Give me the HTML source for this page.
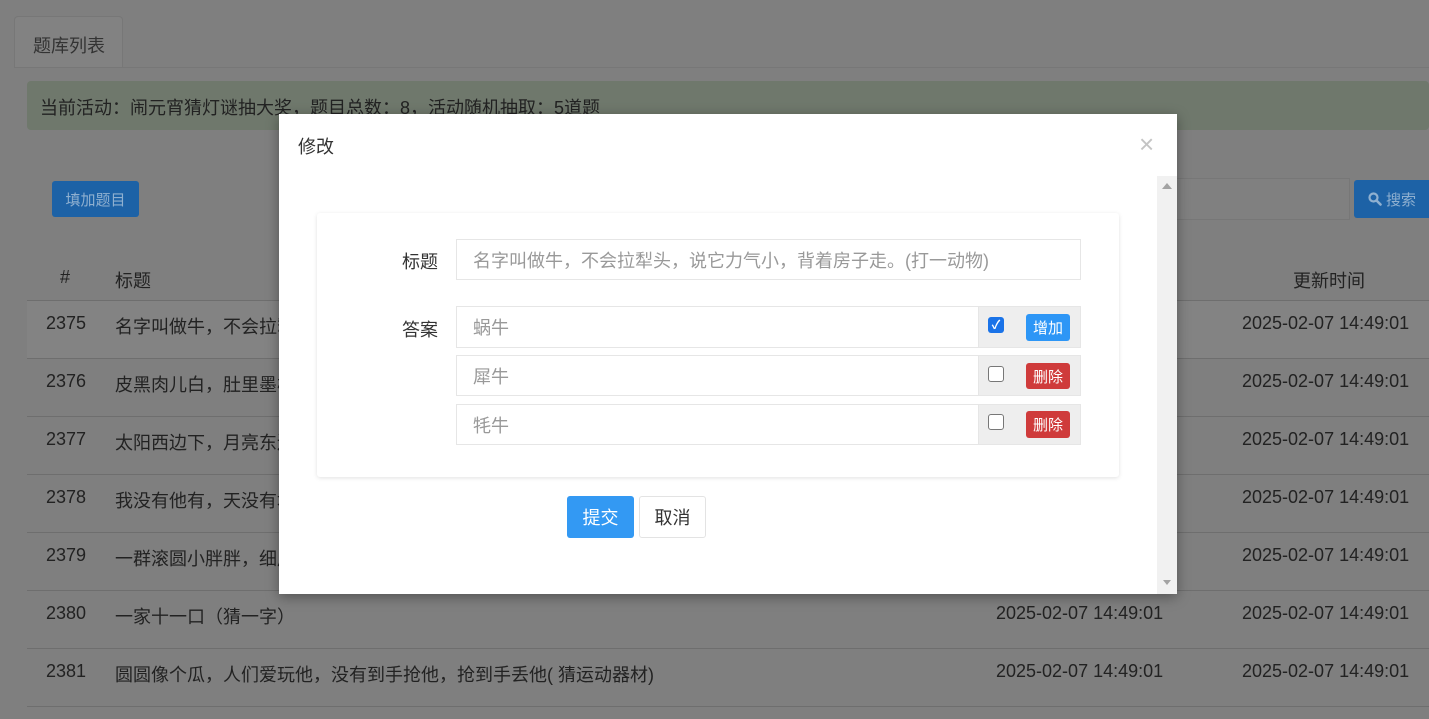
<!DOCTYPE html>
<html><head><meta charset="utf-8"><style>
*{box-sizing:border-box;margin:0;padding:0}
body{width:1429px;height:719px;overflow:hidden;background:#7f7f7f;font-family:"Liberation Sans","Noto Sans CJK SC",sans-serif;color:#1a1a1a;position:relative}
.a{position:absolute;white-space:nowrap}
.line{position:absolute;left:27px;right:0;height:1px;background:#6e6e6e}
.t{font-size:18px;color:#222}
.in{position:absolute;background:#fff;border:1px solid #e6e6e6;font-size:18px;color:#999;padding-left:16px;display:flex;align-items:center}
.addon{position:absolute;background:#eee;border:1px solid #e6e6e6}
.btn{position:absolute;color:#fff;font-size:15px;border-radius:3px;display:flex;align-items:center;justify-content:center}
.cb{position:absolute;width:16px;height:16px;border:1px solid #777;border-radius:3px;background:#fff}
</style></head><body>
<div class="a" style="left:14px;top:16px;width:109px;height:52px;background:#828282;border:1px solid #777;border-bottom:none;border-radius:4px 4px 0 0"></div>
<div class="a" style="left:14px;top:67px;right:0;height:1px;background:#777"></div>
<div class="a t" style="left:33px;top:32px;font-size:18px;color:#333">题库列表</div>
<div class="a" style="left:27px;top:81px;right:0;height:49px;background:#6f786c;border-radius:4px"></div>
<div class="a t" style="left:40px;top:94px;color:#222">当前活动：闹元宵猜灯谜抽大奖，题目总数：8，活动随机抽取：5道题</div>
<div class="btn" style="left:52px;top:181px;width:87px;height:36px;background:#1d62a6;color:#8fb0d0">填加题目</div>
<div class="a" style="left:1170px;top:178px;width:180px;height:42px;border:1px solid #777;background:#808080"></div>
<div class="btn" style="left:1354px;top:180px;width:80px;height:38px;background:#1d62a6;color:#8fb0d0;justify-content:flex-start;padding-left:14px"><svg width="14" height="14" viewBox="0 0 14 14" style="margin-right:4px"><circle cx="5.5" cy="5.5" r="4" fill="none" stroke="#8fb0d0" stroke-width="2.2"/><path d="M8.5 8.5L12.5 12.5" stroke="#8fb0d0" stroke-width="2.6" stroke-linecap="round"/></svg>搜索</div>
<div class="a t" style="left:60px;top:267px">#</div>
<div class="a t" style="left:115px;top:267px">标题</div>
<div class="a t" style="left:1293px;top:267px">更新时间</div>
<div class="line" style="top:300px"></div>
<div class="a" style="left:27px;top:301px;right:0;height:57px;background:#838383"></div>
<div class="line" style="top:358px"></div><div class="line" style="top:416px"></div><div class="line" style="top:474px"></div><div class="line" style="top:532px"></div><div class="line" style="top:590px"></div><div class="line" style="top:648px"></div><div class="line" style="top:706px"></div>
<div class="a t" style="left:46px;top:313px">2375</div><div class="a t" style="left:115px;top:313px">名字叫做牛，不会拉犁</div>
<div class="a t" style="left:46px;top:371px">2376</div><div class="a t" style="left:115px;top:371px">皮黑肉儿白，肚里墨样</div>
<div class="a t" style="left:46px;top:429px">2377</div><div class="a t" style="left:115px;top:429px">太阳西边下，月亮东边</div>
<div class="a t" style="left:46px;top:487px">2378</div><div class="a t" style="left:115px;top:487px">我没有他有，天没有地</div>
<div class="a t" style="left:46px;top:545px">2379</div><div class="a t" style="left:115px;top:545px">一群滚圆小胖胖，细皮</div>
<div class="a t" style="left:46px;top:603px">2380</div><div class="a t" style="left:115px;top:603px">一家十一口（猜一字）</div>
<div class="a t" style="left:46px;top:661px">2381</div><div class="a t" style="left:115px;top:661px">圆圆像个瓜，人们爱玩他，没有到手抢他，抢到手丢他( 猜运动器材)</div>
<div class="a t" style="left:996px;top:603px">2025-02-07 14:49:01</div><div class="a t" style="left:996px;top:661px">2025-02-07 14:49:01</div>
<div class="a t" style="left:1242px;top:313px">2025-02-07 14:49:01</div>
<div class="a t" style="left:1242px;top:371px">2025-02-07 14:49:01</div>
<div class="a t" style="left:1242px;top:429px">2025-02-07 14:49:01</div>
<div class="a t" style="left:1242px;top:487px">2025-02-07 14:49:01</div>
<div class="a t" style="left:1242px;top:545px">2025-02-07 14:49:01</div>
<div class="a t" style="left:1242px;top:603px">2025-02-07 14:49:01</div>
<div class="a t" style="left:1242px;top:661px">2025-02-07 14:49:01</div>

<div class="a" style="left:279px;top:114px;width:898px;height:480px;background:#fff;box-shadow:0 3px 12px rgba(0,0,0,.35)"></div>
<div class="a" style="left:298px;top:133px;font-size:18px;color:#333">修改</div>
<div class="a" style="left:1139px;top:129px;font-size:26px;color:#c4c4c4">×</div>
<div class="a" style="left:1157px;top:176px;width:20px;height:418px;background:#f1f1f1"></div>
<div class="a" style="left:1162px;top:183px;width:0;height:0;border-left:5px solid transparent;border-right:5px solid transparent;border-bottom:6px solid #a3a3a3"></div>
<div class="a" style="left:1163px;top:580px;width:0;height:0;border-left:4px solid transparent;border-right:4px solid transparent;border-top:5px solid #a3a3a3"></div>
<div class="a" style="left:317px;top:213px;width:802px;height:264px;background:#fff;border-radius:3px;box-shadow:0 1px 4px rgba(0,0,0,.12)"></div>
<div class="a t" style="left:402px;top:248px;color:#333">标题</div>
<div class="a t" style="left:402px;top:316px;color:#333">答案</div>
<div class="in" style="left:456px;top:239px;width:625px;height:41px">名字叫做牛，不会拉犁头，说它力气小，背着房子走。(打一动物)</div>
<div class="in" style="left:456px;top:306px;width:523px;height:42px">蜗牛</div>
<div class="addon" style="left:978px;top:306px;width:103px;height:42px"></div>
<div class="a" style="left:988px;top:317px;width:16px;height:16px;background:#1a73e8;border-radius:3px;color:#fff;font-size:12px;line-height:16px;text-align:center;font-weight:bold">✓</div>
<div class="btn" style="left:1026px;top:314px;width:44px;height:27px;background:#2d96f6">增加</div>
<div class="in" style="left:456px;top:355px;width:523px;height:41px">犀牛</div>
<div class="addon" style="left:978px;top:355px;width:103px;height:41px"></div>
<div class="cb" style="left:988px;top:366px"></div>
<div class="btn" style="left:1026px;top:363px;width:44px;height:26px;background:#cf3b3b">删除</div>
<div class="in" style="left:456px;top:404px;width:523px;height:41px">牦牛</div>
<div class="addon" style="left:978px;top:404px;width:103px;height:41px"></div>
<div class="cb" style="left:988px;top:414px"></div>
<div class="btn" style="left:1026px;top:411px;width:44px;height:27px;background:#cf3b3b">删除</div>
<div class="btn" style="left:567px;top:496px;width:67px;height:42px;background:#3399f3;font-size:18px">提交</div>
<div class="btn" style="left:639px;top:496px;width:67px;height:42px;background:#fff;border:1px solid #e3e3e3;color:#333;font-size:18px">取消</div>
</body></html>
